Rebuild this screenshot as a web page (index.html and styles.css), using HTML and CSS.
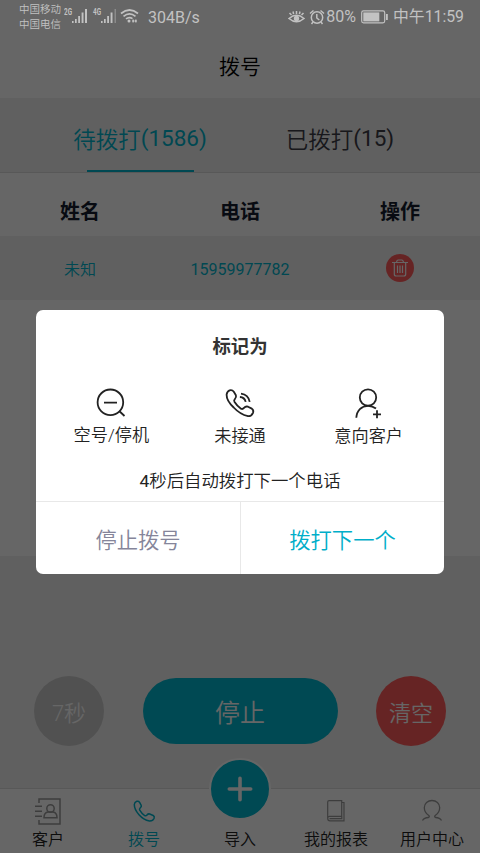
FILE: index.html
```html
<!DOCTYPE html>
<html lang="zh-CN">
<head>
<meta charset="utf-8">
<meta name="viewport" content="width=device-width, initial-scale=1">
<title>拨号</title>
<link rel="stylesheet" href="styles.css">
</head>
<body>
<div class="app">
  <div class="status">
    <div class="carriers"><span>中国移动</span><span>中国电信</span></div>
    <svg class="signals" width="76" height="18" viewBox="0 0 76 18">
      <g fill="currentColor">
        <path d="M8 14h1.600v2H8zM11 12h1.700v4H11zM14.200 9h1.800v7h-1.800zM17.600 5.500h1.900v10.500h-1.900zM21 2h2v14h-2z"/>
        <path d="M37 14h1.600v2H37zM40 12h1.700v4H40zM43.200 9h1.800v7h-1.800zM46.600 5.500h1.900v10.500h-1.900z"/>
        <path d="M50.500 2h1.500v14h-1.500z" opacity=".4"/>
        <circle cx="65" cy="14" r="1.500"/>
        <path d="M69 12l1.500 2-1.500 2-1-2zM72 12l1 2-1 2-1.500-2z"/>
      </g>
      <g fill="none" stroke="currentColor" stroke-width="1.700">
        <path d="M57 6.500q8.500-7 17 0M59.500 9.300q6-5 12 0M62 11.900q3.200-2.600 6.500-.3"/>
      </g>
      <text x="0" y="8" textLength="8" lengthAdjust="spacingAndGlyphs" class="net">2G</text>
      <text x="29" y="8" textLength="8" lengthAdjust="spacingAndGlyphs" class="net">4G</text>
    </svg>
    <span class="speed">304B/s</span>
    <div class="status-right">
      <svg width="17" height="16" viewBox="0 0 17 16" fill="none" stroke="currentColor" stroke-width="1.500">
        <path d="M1 9.500Q8.500 3 16 9.500Q8.500 16 1 9.500zM1.500 4l2 2M15.500 4l-2 2M8.500 2v3M5 2.500l.6 2.700M12 2.500l-.6 2.700"/>
        <circle cx="8.500" cy="9.500" r="2.700" fill="currentColor" stroke="none"/>
      </svg>
      <svg class="alarm" width="16" height="16" viewBox="0 0 16 16" fill="none" stroke="currentColor" stroke-width="1.500">
        <circle cx="8" cy="8.500" r="5.700"/><path d="M7.800 5v4l2.500 2M1 4.500L4.500 1.500M15 4.500L11.500 1.500M4 13l-1.500 2M12 13l1.500 2"/>
      </svg>
      <span class="pct">80%</span>
      <svg class="battery" width="27" height="14" viewBox="0 0 27 14">
        <rect x=".7" y=".9" width="23" height="12" rx="1.800" fill="none" stroke="currentColor" stroke-width="1.200"/>
        <rect x="2.300" y="2.400" width="16" height="9" fill="currentColor"/><rect x="25" y="4" width="1.800" height="6" fill="currentColor"/>
      </svg>
      <span class="clock">中午11:59</span>
    </div>
  </div>

  <header class="title">拨号</header>
  <div class="tabs">
    <div class="tab active">待拨打<span class="num">(1586)</span></div>
    <div class="tab">已拨打<span class="num">(15)</span></div>
  </div>
  <div class="row head"><span>姓名</span><span>电话</span><span>操作</span></div>
  <div class="row item">
    <span>未知</span><span class="phone">15959977782</span>
    <span><i class="trash">
      <svg width="16" height="18" viewBox="0 0 16 18" fill="none" stroke="currentColor" stroke-width="1.200">
        <path d="M0 3.500h16M4.500 3.500q.3-2.500 1.700-2.500h3.600q1.400 0 1.700 2.500M2.300 4v11q0 2 1.800 2h7.800q1.800 0 1.800-2V4M5.500 6.500v7.500M8 6.500v7.500M10.500 6.500v7.500"/>
      </svg></i></span>
  </div>
  <div class="blank"></div>
  <div class="controls">
    <div class="round wait">7秒</div>
    <div class="stop">停止</div>
    <div class="round clear">清空</div>
  </div>
  <nav class="nav">
    <div class="nav-item">
      <svg class="muted" width="28" height="28" viewBox="0 0 28 28" fill="none" stroke="currentColor" stroke-width="1.500">
        <path d="M5 6V2h21v25H5v-4M1 9.300h7M1 14.300h7M1 19.300h7"/>
        <circle cx="16.500" cy="11.500" r="3.700"/><path d="M10 20.700q0-5.200 4-5.700h5q4 .5 4 5.700z"/>
      </svg><span>客户</span>
    </div>
    <div class="nav-item current">
      <svg width="28" height="28" viewBox="0 0 28 28" fill="none" stroke="currentColor" stroke-width="1.500" stroke-linejoin="round">
        <path d="M4.300 7.500Q4.500 5 6.800 4.300Q8.600 3.800 9.600 5.300L11.200 8.300Q11.800 9.700 10.300 10.800Q9 12 9.700 13.200Q11.600 16.500 14.700 18.600Q16 19.300 17 18Q18.200 16.500 19.700 17L23.200 18.500Q24.800 19.500 24.100 21.300Q22.800 24.300 19.500 24.100Q13.500 22.800 9 17.700Q4.300 12.500 4.300 7.500z"/>
      </svg><span>拨号</span>
    </div>
    <div class="nav-item">
      <div class="plus"><svg width="26" height="26" viewBox="0 0 26 26" stroke="currentColor" stroke-width="3.600" stroke-linecap="round"><path d="M2.300 13h21.400M13 2.300v21.400"/></svg></div>
      <span>导入</span>
    </div>
    <div class="nav-item">
      <svg class="muted" width="28" height="28" viewBox="0 0 28 28" fill="none" stroke="currentColor" stroke-width="1.200">
        <path d="M5.700 21V5q0-1.400 1.400-1.400H19.700V19.300H7.400q-1.700 0-1.700 1.900 0 2.600 2.300 2.600H22V5.500h-2M7.500 21.700h12.300v-2.400"/>
      </svg><span>我的报表</span>
    </div>
    <div class="nav-item">
      <svg class="muted" width="28" height="28" viewBox="0 0 28 28" fill="none" stroke="currentColor" stroke-width="1.300">
        <path d="M4.500 23.500Q6 20.700 10.500 20.500Q12 20 10.800 18.500C7.500 16.300 6.300 13.500 6.300 10.500C6.300 6.300 9.800 3.500 14 3.500S21.700 6.300 21.700 10.500C21.700 13.500 20.500 16.300 17.200 18.500Q16 20 17.500 20.500Q22 20.700 23.500 23.500"/>
      </svg><span>用户中心</span>
    </div>
  </nav>

  <div class="overlay">
    <section class="dialog">
      <h2>标记为</h2>
      <div class="marks">
        <div class="mark first">
          <svg width="32" height="32" viewBox="0 0 32 32" fill="none" stroke="currentColor" stroke-width="1.800">
            <circle cx="15.400" cy="15.300" r="12.800"/><path d="M9 15.600h13M24.200 24l5.300 5"/>
          </svg><span>空号/停机</span>
        </div>
        <div class="mark">
          <svg width="32" height="32" viewBox="0 0 32 32" fill="none" stroke="currentColor" stroke-width="1.800" stroke-linejoin="round">
            <path d="M2.600 7.700Q3 4.300 5.600 3.300Q8.200 2.500 9.800 4.700L11.900 8.200Q12.600 10.300 11 11.800Q9.600 13.200 10.400 14.700Q13 18.900 17 21.700Q18.700 22.500 20 20.900Q21.700 18.900 24 19.700L27.800 21.600Q30 23.300 29 25.800Q27.500 29.300 24 29.200Q16 27.300 9.700 20.500Q2.500 13.600 2.600 7.700z"/>
            <path d="M15.900 10q4.700.3 5.800 4.900M17 6.600q7.300.9 8.700 8.200"/>
          </svg><span>未接通</span>
        </div>
        <div class="mark">
          <svg width="32" height="32" viewBox="0 0 32 32" fill="none" stroke="currentColor" stroke-width="1.800">
            <circle cx="15" cy="10.500" r="8.200"/><path d="M3.300 30.800C3.700 23.500 8.500 18.900 15 18.800Q19.500 18.800 23 21.500M20 27.300h8M24 23.300v8"/>
          </svg><span>意向客户</span>
        </div>
      </div>
      <p class="countdown"><span class="num">4</span>秒后自动拨打下一个电话</p>
      <div class="actions"><div>停止拨号</div><div class="primary">拨打下一个</div></div>
    </section>
  </div>
</div>
</body>
</html>
```
FILE: styles.css
```css
* { box-sizing: border-box; }
body {
  margin: 0;
  font-family: Roboto, "Noto Sans CJK SC", sans-serif;
  font-weight: 350;
  color: #222;
}
svg { display: block; flex: none; }
.num { font-weight: 400; }
.app {
  position: relative;
  height: 853px;
  overflow: hidden;
  background: #fff;
  display: flex;
  flex-direction: column;
}
.status {
  position: relative;
  z-index: 3;
  height: 34px;
  flex: none;
  display: flex;
  align-items: center;
  padding: 0 16px 0 19px;
  color: #c2c2c2;
  font-size: 16px;
}
.carriers {
  display: flex;
  flex-direction: column;
  font-size: 10.500px;
  line-height: 15px;
  width: 45px;
  white-space: nowrap;
}
.signals { margin-top: -3px; }
.net { font: bold 8.500px Roboto, sans-serif; fill: currentColor; }
.speed { margin-left: 8px; font-weight: 400; }
.status-right {
  margin-left: auto;
  display: flex;
  align-items: center;
  line-height: 20px;
  white-space: nowrap;
}
.alarm { margin-left: 4px; }
.pct { margin-left: 1px; font-weight: 400; }
.battery { margin: 0 5px; }
.clock { font-weight: 400; font-size: 15.800px; }
.title {
  height: 64px;
  flex: none;
  text-align: center;
  font-size: 21px;
  line-height: 66px;
  color: #000;
}
.tabs {
  height: 75px;
  flex: none;
  display: flex;
  padding: 0 40px;
  background: #f0f0f0;
  border-bottom: 1px solid #ddd;
}
.tab {
  flex: 1;
  display: flex;
  align-items: center;
  justify-content: center;
  padding-top: 5px;
  font-size: 22.500px;
  color: #3c3c46;
}
.active {
  color: #00b4cc;
  background: linear-gradient(#00b4cc, #00b4cc) center bottom / 107px 2.500px no-repeat;
}
.row {
  flex: none;
  display: grid;
  grid-template-columns: repeat(3, 1fr);
  align-items: center;
  justify-items: center;
}
.head { height: 63px; padding-top: 12px; font-size: 20px; font-weight: 700; color: #141c2e; }
.item { height: 64px; background: #f0f0f0; color: #00b4cc; font-size: 16px; }
.phone { font-weight: 400; padding-top: 2px; }
.trash {
  width: 28px;
  height: 28px;
  border-radius: 50%;
  background: #ff5a5a;
  color: #fff;
  display: flex;
  align-items: center;
  justify-content: center;
}
.blank { height: 256px; flex: none; }
.controls {
  height: 232px;
  flex: none;
  display: flex;
  align-items: flex-end;
  justify-content: space-between;
  padding: 0 34px 42px;
  background: #f0f0f0;
  color: #fff;
}
.round, .stop { display: flex; align-items: center; justify-content: center; }
.round { width: 70px; height: 70px; border-radius: 50%; font-size: 22px; }
.wait { background: #cacaca; }
.clear { background: #ff5a5a; }
.stop { width: 195px; height: 66px; margin-bottom: 2px; border-radius: 33px; background: #00b7cf; font-size: 25px; }
.nav {
  height: 65px;
  flex: none;
  display: grid;
  grid-template-columns: repeat(5, 1fr);
  grid-template-rows: 100%;
  background: #fff;
  border-top: 1px solid #ddd;
  font-size: 16px;
}
.nav-item {
  display: flex;
  flex-direction: column;
  align-items: center;
  justify-content: flex-end;
  gap: 3px;
  padding-bottom: 1px;
  line-height: 24px;
}
.current { color: #00b4cc; }
.muted { color: #999; }
.plus {
  width: 62px;
  height: 62px;
  flex: none;
  margin-bottom: 5px;
  border: 2px solid #fff;
  border-radius: 50%;
  background: #00b7cf;
  color: #fff;
  display: flex;
  align-items: center;
  justify-content: center;
}
.overlay {
  position: absolute;
  inset: 0;
  z-index: 2;
  display: flex;
  justify-content: center;
  align-items: flex-start;
  padding-top: 310px;
  background: rgba(0, 0, 0, .6);
}
.dialog {
  width: 408px;
  height: 264px;
  border-radius: 7px;
  background: #fff;
  display: flex;
  flex-direction: column;
}
h2 { margin: 22px 0 0; font-size: 18.400px; line-height: 30px; text-align: center; color: #333; }
.marks {
  display: grid;
  grid-template-columns: 1fr 1fr 1fr;
  padding: 0 11px;
  margin-top: 25px;
  font-size: 17.200px;
}
.mark { display: flex; flex-direction: column; align-items: center; line-height: 26px; gap: 4px; height: 64px; }
.first { gap: 3px; }
.countdown { margin: 17px 0 6px; text-align: center; font-size: 17.400px; line-height: 27px; }
.actions {
  flex: 1;
  display: grid;
  grid-template-columns: 1fr 1fr;
  border-top: 1px solid #e8e8e8;
  font-size: 21.300px;
}
.actions > div { display: flex; align-items: center; justify-content: center; color: #85859a; }
.actions > .primary { border-left: 1px solid #e8e8e8; color: #00aec9; }
```
